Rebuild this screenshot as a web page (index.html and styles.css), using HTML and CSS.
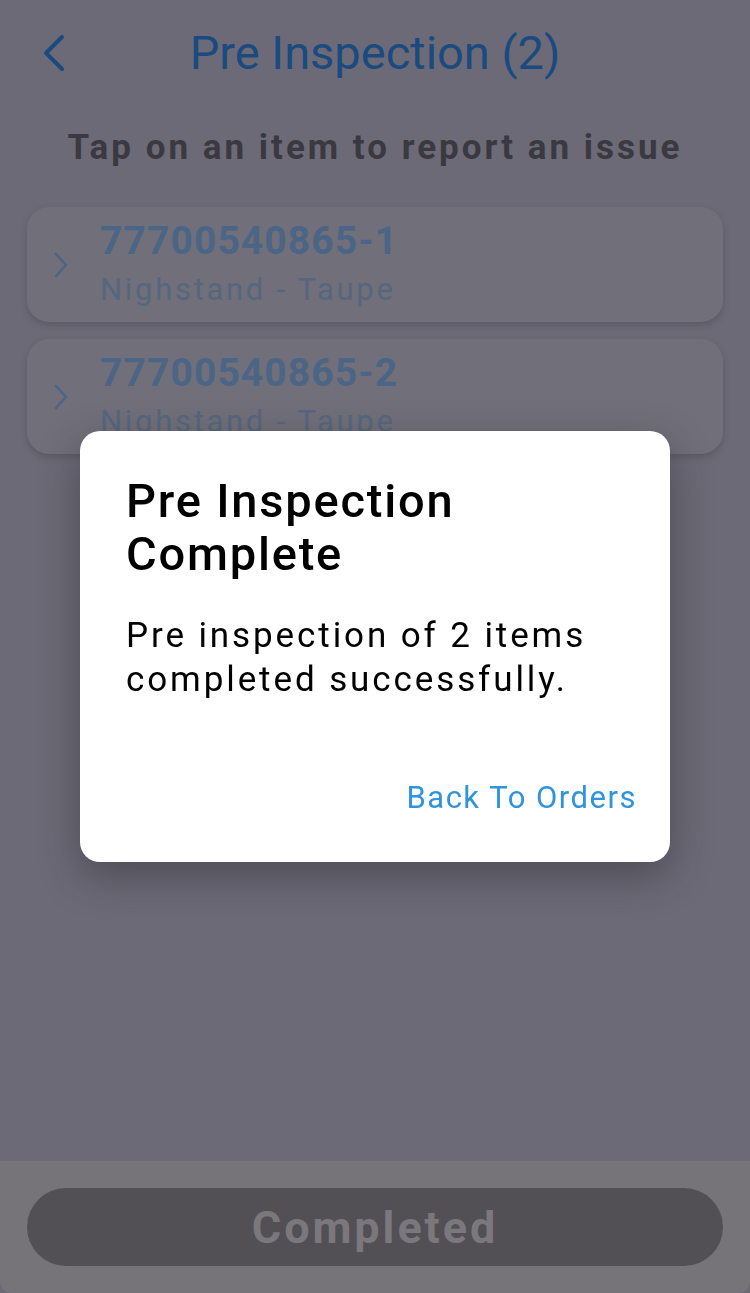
FILE: index.html
```html
<!DOCTYPE html>
<html>
<head>
<meta charset="utf-8">
<link rel="stylesheet" href="styles.css">
</head>
<body>
<div class="screen">
  <header class="header">
    <svg class="back" width="30" height="40" viewBox="0 0 30 40"><path d="M22 4 L6 20 L22 36" fill="none" stroke="#1a4a80" stroke-width="4" stroke-linecap="round" stroke-linejoin="round"/></svg>
    <h1 class="title">Pre Inspection (2)</h1>
  </header>
  <p class="hint">Tap on an item to report an issue</p>
  <div class="list">
    <div class="card">
      <svg class="chev" width="16" height="28" viewBox="0 0 16 28"><path d="M3 3 L13 14 L3 25" fill="none" stroke="#4a6588" stroke-width="2.6" stroke-linecap="round" stroke-linejoin="round"/></svg>
      <div class="info">
        <div class="num">77700540865-1</div>
        <div class="desc">Nighstand - Taupe</div>
      </div>
    </div>
    <div class="card">
      <svg class="chev" width="16" height="28" viewBox="0 0 16 28"><path d="M3 3 L13 14 L3 25" fill="none" stroke="#4a6588" stroke-width="2.6" stroke-linecap="round" stroke-linejoin="round"/></svg>
      <div class="info">
        <div class="num">77700540865-2</div>
        <div class="desc">Nighstand - Taupe</div>
      </div>
    </div>
  </div>
  <div class="spacer"></div>
  <footer class="footer">
    <div class="btn">Completed</div>
  </footer>
</div>
<div class="overlay">
  <div class="dialog">
    <h2 class="d-title">Pre Inspection Complete</h2>
    <p class="d-body">Pre inspection of 2 items completed successfully.</p>
    <div class="d-actions"><span class="d-link">Back To Orders</span></div>
  </div>
</div>
</body>
</html>
```
FILE: styles.css
```css
* { box-sizing: border-box; }
html, body { margin: 0; padding: 0; }
body {
  width: 750px;
  height: 1293px;
  overflow: hidden;
  background: #6c6a76;
  font-family: Roboto, "Noto Sans", sans-serif;
}
.screen {
  height: 1293px;
  display: flex;
  flex-direction: column;
}
.header {
  position: relative;
  height: 104px;
  display: flex;
  align-items: center;
  justify-content: center;
}
.back {
  position: absolute;
  left: 40px;
  top: 33px;
}
.title {
  margin: 0;
  font-size: 47px;
  font-weight: 400;
  color: #1a4a80;
}
.hint {
  margin: 24px 0 0;
  text-align: center;
  font-size: 35px;
  font-weight: 700;
  color: #3a3941;
  letter-spacing: 3px;
  line-height: 40px;
}
.list {
  margin: 39px 27px 0 27px;
  display: flex;
  flex-direction: column;
  gap: 17px;
}
.card {
  height: 115px;
  border-radius: 22px;
  background: #716f79;
  box-shadow: 0 3px 6px rgba(60,58,68,0.35);
  display: flex;
  align-items: center;
  padding-left: 26px;
  gap: 31px;
}
.info {
  display: flex;
  flex-direction: column;
  align-self: flex-start;
  padding-top: 11px;
}
.num {
  font-size: 39px;
  font-weight: 700;
  color: #4a6586;
  letter-spacing: 1.1px;
  line-height: 46px;
}
.desc {
  font-size: 31px;
  color: #55677f;
  letter-spacing: 2.7px;
  line-height: 52px;
}
.spacer { flex: 1; }
.footer {
  height: 132px;
  background: #767479;
  border-radius: 0 0 12px 12px;
  padding: 27px 27px 0;
}
.btn {
  height: 78px;
  border-radius: 39px;
  background: #525054;
  color: #7a787c;
  font-size: 45px;
  font-weight: 700;
  letter-spacing: 2.9px;
  display: flex;
  align-items: center;
  justify-content: center;
}
.overlay {
  position: fixed;
  inset: 0;
  display: flex;
  align-items: center;
  justify-content: center;
}
.dialog {
  width: 590px;
  height: 431px;
  background: #ffffff;
  border-radius: 20px;
  box-shadow: 0 14px 40px rgba(40,38,48,0.45);
  padding: 43px 46px 0;
  display: flex;
  flex-direction: column;
}
.d-title {
  margin: 0;
  font-size: 47px;
  font-weight: 500;
  line-height: 53px;
  letter-spacing: 1.8px;
  color: #000;
}
.d-body {
  margin: 34px 0 0;
  font-size: 35px;
  line-height: 44px;
  letter-spacing: 2.9px;
  color: #000;
}
.d-actions {
  margin-top: 77px;
  margin-right: -13px;
  display: flex;
  justify-content: flex-end;
}
.d-link {
  font-size: 31px;
  color: #2f94dc;
  letter-spacing: 1.5px;
}
```
